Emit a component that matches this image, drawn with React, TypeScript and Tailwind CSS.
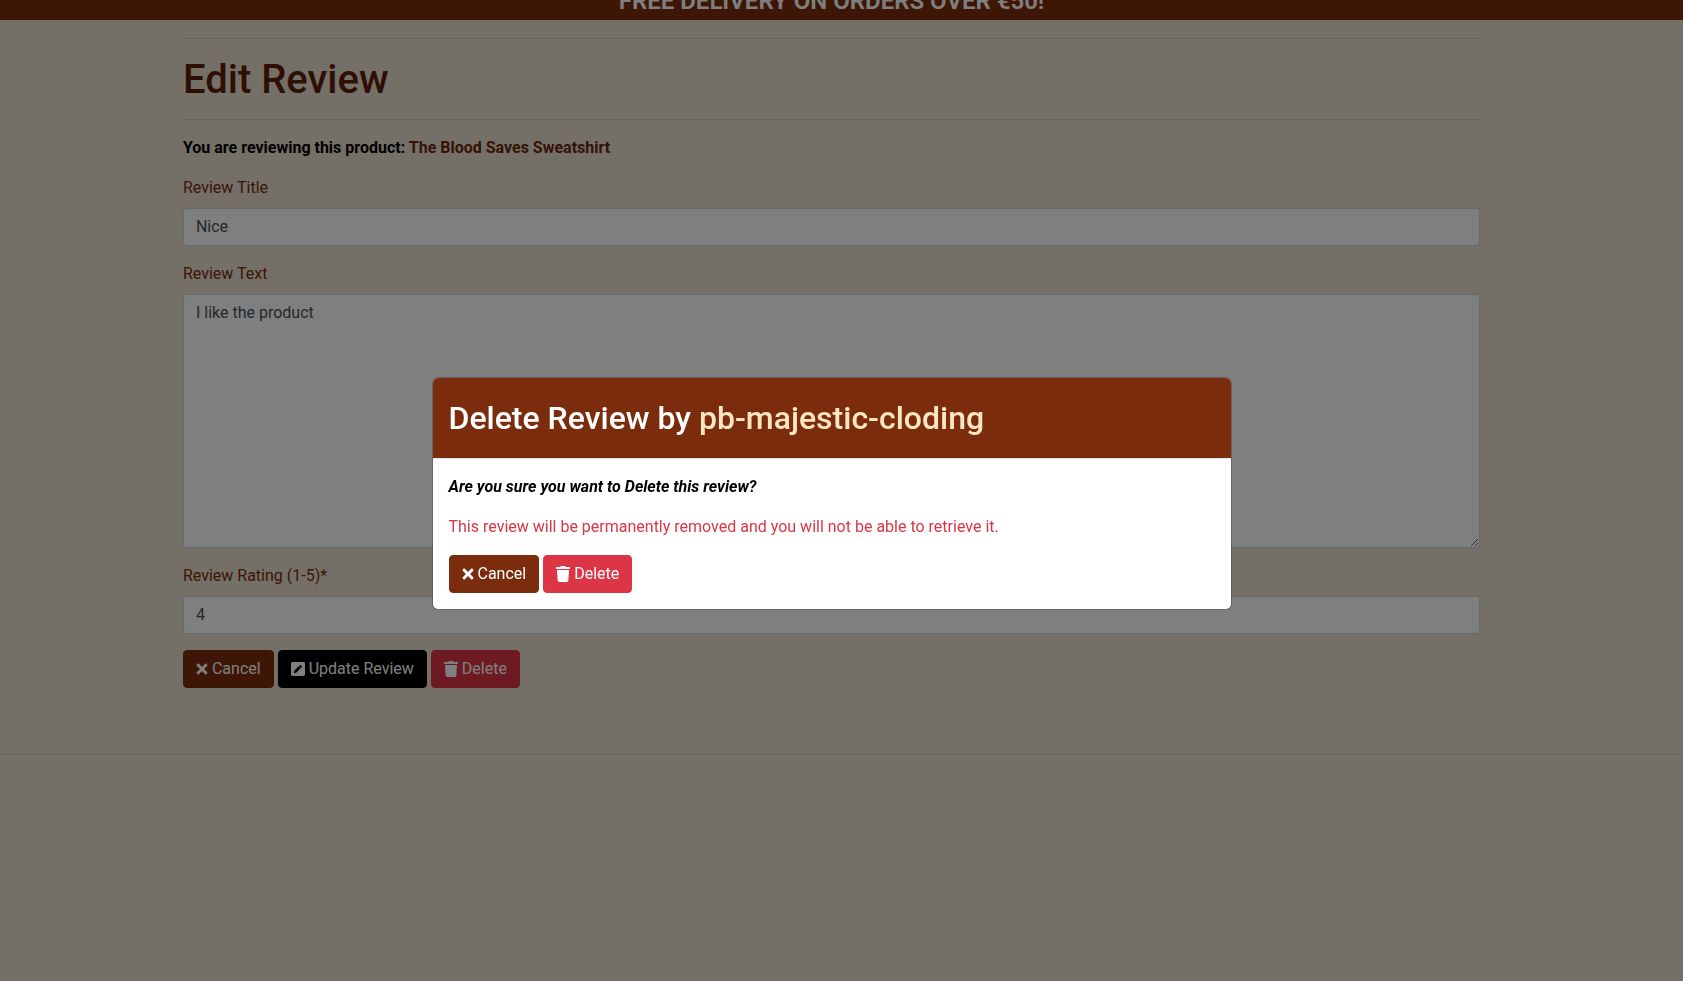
import { FaPenSquare, FaTimes, FaTrash } from "react-icons/fa";
import type { ReactNode } from "react";

const fieldClass =
  "block w-full rounded border border-[#ced4da] bg-white px-3 py-1.5 text-base leading-6 text-[#495057]";

const buttonBase =
  "inline-flex items-center gap-1 rounded border px-3 py-1.5 text-base leading-6 text-white";

function Field({ id, label, children }: { id: string; label: string; children: ReactNode }) {
  return (
    <div className="mb-4">
      <label htmlFor={id} className="mb-2 block text-[#7b2c0d]">
        {label}
      </label>
      {children}
    </div>
  );
}

function CancelButton() {
  return (
    <button type="button" className={`${buttonBase} border-[#7b2c0d] bg-[#7b2c0d]`}>
      <FaTimes className="h-4 w-3" />
      Cancel
    </button>
  );
}

function DeleteButton() {
  return (
    <button type="button" className={`${buttonBase} border-[#dc3545] bg-[#dc3545]`}>
      <FaTrash className="h-4 w-3.5" />
      Delete
    </button>
  );
}

function DeleteDialog() {
  return (
    <div className="fixed inset-0 flex items-center justify-center bg-black/50 pt-1.5 pr-5">
      <div
        role="dialog"
        aria-modal="true"
        aria-labelledby="dialog-title"
        className="w-full max-w-[800px] overflow-hidden rounded-md border border-black/20 bg-white bg-clip-padding"
      >
        <div className="border-b border-[#dee2e6] bg-[#7b2c0d] bg-clip-padding px-4 py-5">
          <h2 id="dialog-title" className="text-[32px] leading-10 font-medium text-white">
            Delete Review by <span className="text-[#ffe6c2]">pb-majestic-cloding</span>
          </h2>
        </div>
        <div className="p-4">
          <p className="mb-4 font-bold text-black italic">Are you sure you want to Delete this review?</p>
          <p className="mb-4 text-[#dc3545]">
            This review will be permanently removed and you will not be able to retrieve it.
          </p>
          <div className="flex gap-1">
            <CancelButton />
            <DeleteButton />
          </div>
        </div>
      </div>
    </div>
  );
}

export default function App() {
  return (
    <div className="min-h-screen bg-[#e9dfcf] font-[Roboto,sans-serif] text-base leading-6 text-black">
      <div className="flex h-5 items-end justify-center overflow-hidden bg-[#7b2c0d] pr-5">
        <p className="text-2xl leading-[38px] font-semibold text-white">FREE DELIVERY ON ORDERS OVER €50!</p>
      </div>
      <div className="pr-5">
        <main className="mx-auto w-[78%]">
          <hr className="mt-[18px] border-black/10" />
          <h1 className="pt-[17px] pb-[15px] text-[40px] leading-12 font-medium text-[#5c1e06]">Edit Review</h1>
          <hr className="border-black/10" />
          <p className="my-4 font-bold">
            You are reviewing this product:{" "}
            <a href="#product" className="text-[#6b260b]">
              The Blood Saves Sweatshirt
            </a>
          </p>
          <form onSubmit={(event) => event.preventDefault()}>
            <Field id="title" label="Review Title">
              <input id="title" type="text" defaultValue="Nice" className={fieldClass} />
            </Field>
            <Field id="text" label="Review Text">
              <textarea id="text" rows={10} defaultValue="I like the product" className={fieldClass} />
            </Field>
            <Field id="rating" label="Review Rating (1-5)*">
              <input id="rating" type="text" defaultValue="4" className={fieldClass} />
            </Field>
            <div className="flex gap-1">
              <CancelButton />
              <button type="submit" className={`${buttonBase} border-black bg-black`}>
                <FaPenSquare className="h-4 w-3.5" />
                Update Review
              </button>
              <DeleteButton />
            </div>
          </form>
        </main>
      </div>
      <hr className="mt-[66px] border-black/10" />
      <DeleteDialog />
    </div>
  );
}
